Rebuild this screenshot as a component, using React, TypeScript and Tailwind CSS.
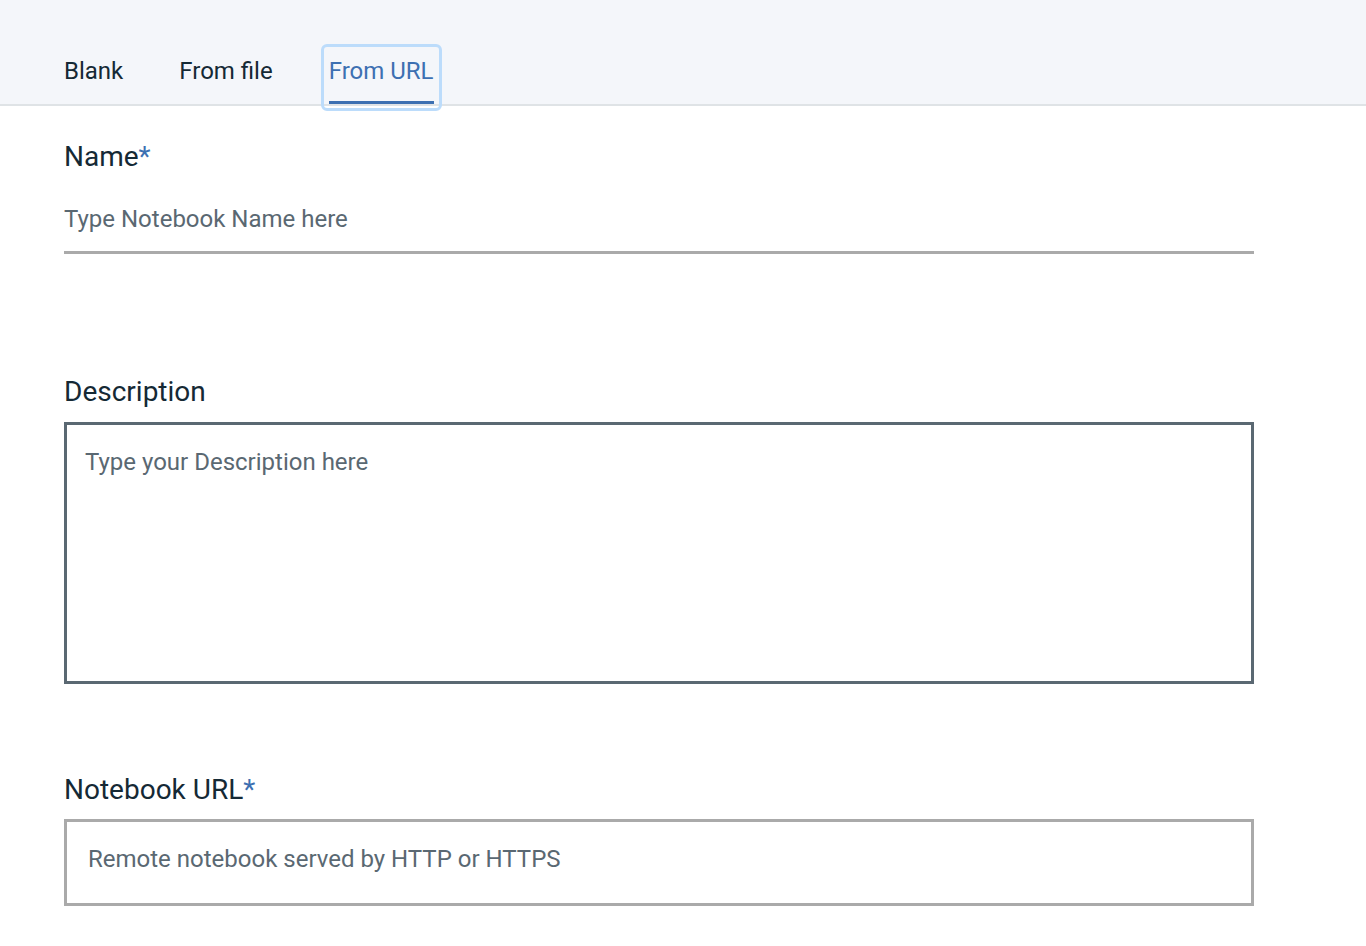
import { useState } from "react";

const tabs = ["Blank", "From file", "From URL"];

export default function App() {
  const [active, setActive] = useState(2);

  return (
    <div className="min-h-screen w-full bg-white text-[#152935] font-['Roboto',sans-serif]">
      {/* Header with tabs */}
      <header className="h-[106px] bg-[#f4f6fa] border-b-2 border-[#dfe3e6] flex items-end">
        <nav className="flex pl-[64px] gap-[56px]">
          {tabs.map((t, i) => (
            <div
              key={t}
              role="tab"
              onClick={() => setActive(i)}
              className={
                "relative h-[47px] cursor-pointer text-[24px] leading-[28px] " +
                (i === active ? "text-[#3d70b2]" : "text-[#152935]")
              }
            >
              <span className="block whitespace-nowrap">{t}</span>
              {i === active && (
                <>
                  <span className="absolute left-0 right-0 bottom-0 h-[3px] bg-[#3d70b2]" />
                  <span className="absolute -left-[8px] -right-[8px] -top-[13px] -bottom-[7px] rounded-[6px] border-[3px] border-[#bcdcfb]" />
                </>
              )}
            </div>
          ))}
        </nav>
      </header>

      <main className="px-[64px] w-[1318px]">
        {/* Name */}
        <section className="pt-[34px]">
          <label className="block text-[28px] leading-[34px]">
            Name<span className="text-[#3d70b2]">*</span>
          </label>
          <div className="mt-[31px] pb-[18px] border-b-[3px] border-[#aaaaaa]">
            <input
              className="block w-full h-[28px] text-[24px] leading-[28px] outline-none placeholder:text-[#5a6872] bg-transparent"
              placeholder="Type Notebook Name here"
            />
          </div>
        </section>

        {/* Description */}
        <section className="pt-[121px]">
          <label className="block text-[28px] leading-[34px]">Description</label>
          <textarea
            className="mt-[13px] block w-full h-[262px] border-[3px] border-[#5a6872] px-[18px] pt-[23px] text-[24px] leading-[28px] outline-none resize-none placeholder:text-[#5a6872]"
            placeholder="Type your Description here"
          />
        </section>

        {/* Notebook URL */}
        <section className="pt-[89px]">
          <label className="block text-[28px] leading-[34px]">
            Notebook URL<span className="text-[#3d70b2]">*</span>
          </label>
          <input
            className="mt-[12px] block w-full h-[87px] border-[3px] border-[#aaaaaa] px-[21px] pt-[23px] pb-[30px] text-[24px] leading-[28px] outline-none placeholder:text-[#5a6872]"
            placeholder="Remote notebook served by HTTP or HTTPS"
          />
        </section>
      </main>
    </div>
  );
}
